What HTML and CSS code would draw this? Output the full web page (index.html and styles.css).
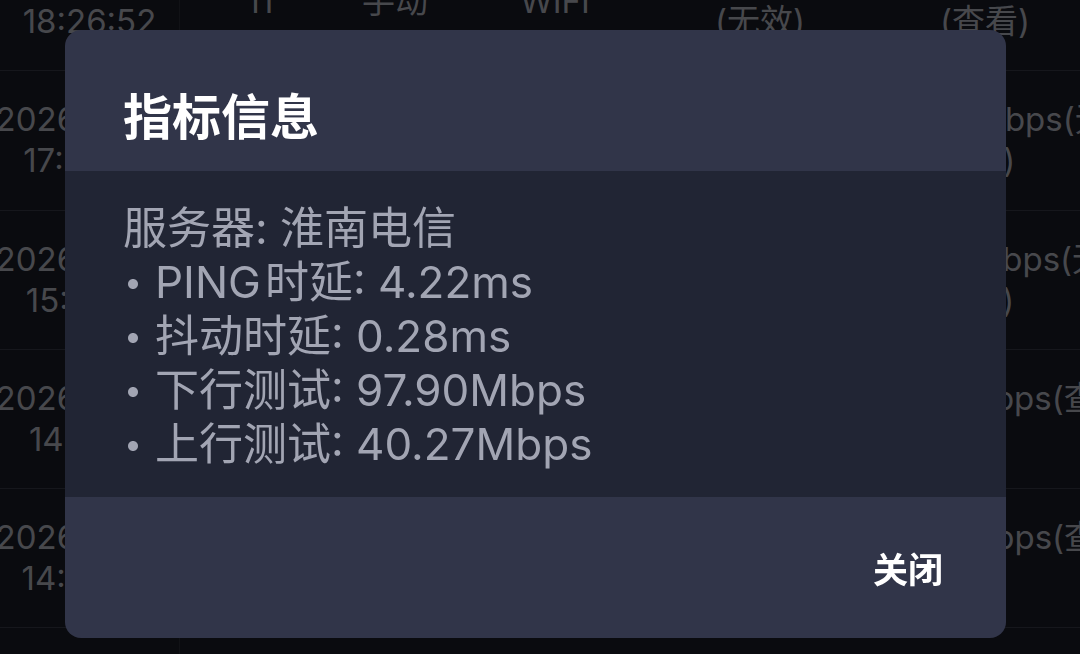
FILE: index.html
```html
<!DOCTYPE html>
<html lang="zh-CN">

<head>
  <meta charset="UTF-8" />
  <title>测速记录</title>
  <link rel="stylesheet" href="styles.css">
</head>

<body>
  <div class="records">
    <div class="row">
      <div class="cell">2026-03-14<br>18:26:52</div>
      <div class="cell">11</div>
      <div class="cell">手动</div>
      <div class="cell">WIFI</div>
      <div class="cell">0.00Mbps<br>(无效)</div>
      <div class="cell">97.90Mbps<br>(查看)</div>
    </div>
    <div class="row">
      <div class="cell">2026-03-14<br>17:42:08</div>
      <div class="cell">10</div>
      <div class="cell">自动</div>
      <div class="cell">WIFI</div>
      <div class="cell">0.00Mbps<br>(无效)</div>
      <div class="cell cell-left cell-wide">187.25Mbps(无效<br>42.6 ms)</div>
    </div>
    <div class="row">
      <div class="cell">2026-03-14<br>15:10:33</div>
      <div class="cell">9</div>
      <div class="cell">自动</div>
      <div class="cell">WIFI</div>
      <div class="cell">0.00Mbps<br>(无效)</div>
      <div class="cell cell-left cell-wide">192.14Mbps(无效<br>45.8 ms)</div>
    </div>
    <div class="row">
      <div class="cell">2026-03-14<br>14:51:19</div>
      <div class="cell">8</div>
      <div class="cell">手动</div>
      <div class="cell">WIFI</div>
      <div class="cell">38.61Mbps<br>(查看)</div>
      <div class="cell cell-left">95.36Mbps(查看)<br>&nbsp;</div>
    </div>
    <div class="row">
      <div class="cell">2026-03-14<br>14:02:45</div>
      <div class="cell">7</div>
      <div class="cell">手动</div>
      <div class="cell">WIFI</div>
      <div class="cell">41.08Mbps<br>(查看)</div>
      <div class="cell cell-left">96.02Mbps(查看)<br>&nbsp;</div>
    </div>
    <div class="row">
      <div class="cell">2026-03-13<br>22:17:30</div>
      <div class="cell">6</div>
      <div class="cell">自动</div>
      <div class="cell">WIFI</div>
      <div class="cell">39.77Mbps<br>(查看)</div>
      <div class="cell">94.55Mbps<br>(查看)</div>
    </div>
  </div>

  <div class="mask">
    <div class="dialog">
      <div class="dialog-head">
        <h2>指标信息</h2>
      </div>
      <div class="dialog-body">
        <p>服务器: 淮南电信</p>
        <p><span class="dot">•</span>PING&#8202;时延: 4.22ms</p>
        <p><span class="dot">•</span>抖动时延: 0.28ms</p>
        <p><span class="dot">•</span>下行测试: 97.90Mbps</p>
        <p><span class="dot">•</span>上行测试: 40.27Mbps</p>
      </div>
      <div class="dialog-foot">
        <button class="close-btn" type="button">关闭</button>
      </div>
    </div>
  </div>
</body>

</html>
```

FILE: styles.css
```css
html,
body {
  margin: 0;
  height: 100%;
  overflow: hidden;
}

body {
  font-family: Inter, "Noto Sans CJK SC", sans-serif;
  background-color: #14161f;
}

/* records table behind the dialog */
.records {
  margin-top: -68px;
  width: 1110px;
}

.row {
  display: grid;
  grid-template-columns: 180px 160px 110px 210px 200px 250px;
  height: 139.25px;
  box-sizing: border-box;
  border-bottom: 1px solid #2c2e38;
}

.cell {
  display: flex;
  align-items: center;
  justify-content: center;
  text-align: center;
  white-space: nowrap;
  font-size: 33px;
  line-height: 41px;
  color: #8f9099;
}

.cell-left {
  justify-content: flex-start;
  text-align: left;
  padding-left: 15px;
}

.cell-wide {
  padding-left: 17px;
}

.row .cell:first-child {
  border-right: 1px solid #22242d;
}

/* dialog */
.mask {
  position: fixed;
  inset: 0;
  background: rgba(0, 0, 0, 0.5);
  display: flex;
  align-items: flex-start;
  padding: 30px 0 0 65px;
}

.dialog {
  width: 941px;
  border-radius: 16px;
  overflow: hidden;
  background-color: #313549;
}

.dialog-head {
  height: 141px;
  display: flex;
  align-items: center;
  padding: 0 58px;
  box-sizing: border-box;
}

.dialog-head h2 {
  margin: 0;
  padding-top: 25px;
  font-size: 49px;
  font-weight: bold;
  color: #fff;
}

.dialog-body {
  height: 326px;
  box-sizing: border-box;
  padding: 30px 58px 0;
  background-color: #212534;
}

.dialog-body p {
  margin: 0;
  font-size: 44px;
  line-height: 54px;
  color: #a2a5b3;
  white-space: nowrap;
}

.dot {
  display: inline-block;
  width: 32px;
  font-size: 32px;
  vertical-align: top;
  text-indent: 1px;
}

.dialog-foot {
  height: 141px;
  display: flex;
  align-items: center;
  justify-content: flex-end;
  padding: 0 63px;
}

.close-btn {
  background: none;
  border: none;
  padding: 0;
  font-family: inherit;
  font-size: 35px;
  font-weight: bold;
  color: #fff;
  cursor: pointer;
}
```
